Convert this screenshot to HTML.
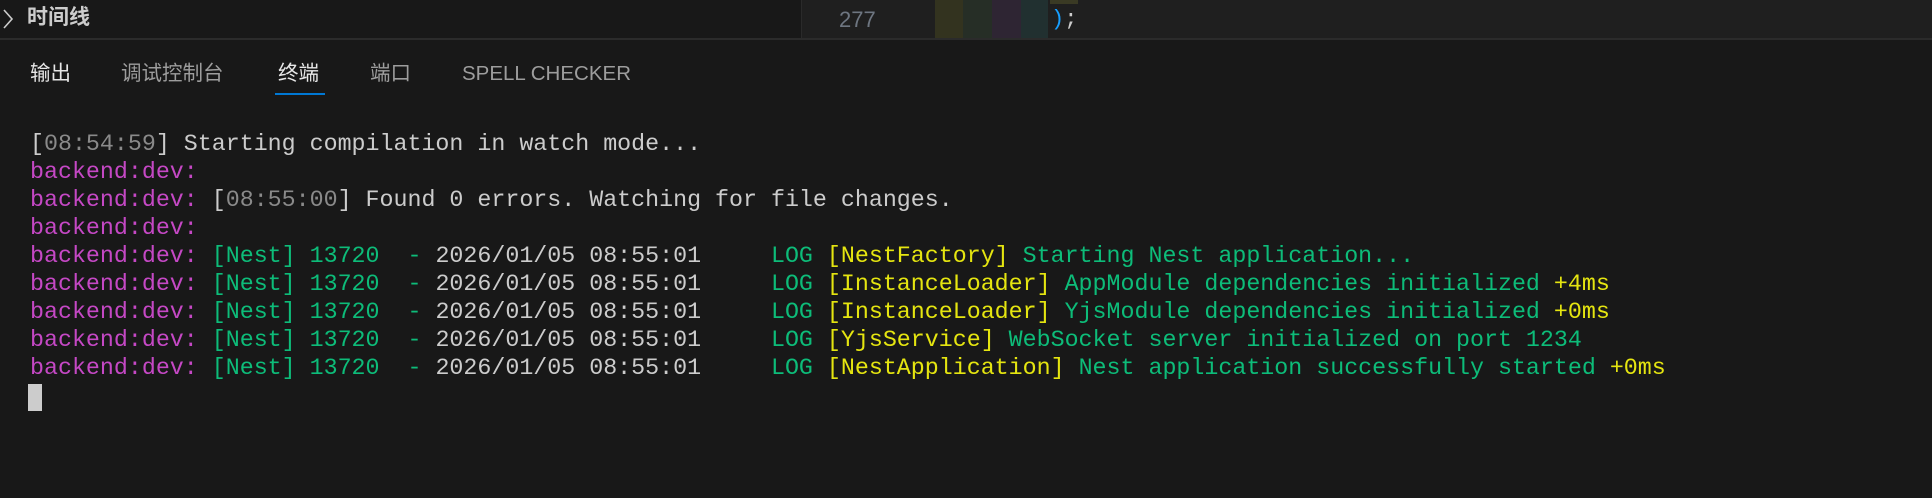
<!DOCTYPE html>
<html><head><meta charset="utf-8"><style>
html,body{margin:0;padding:0;background:#181818;width:1932px;height:498px;overflow:hidden;position:relative;font-family:"Liberation Sans","Noto Sans CJK SC",sans-serif}
.top{position:absolute;left:0;top:0;width:1932px;height:38px;background:#181818;border-bottom:2px solid #2b2b2b}
.tl{position:absolute;left:27px;top:3px;color:#cccccc;font-size:21px;font-weight:bold;line-height:30px}
.ed{position:absolute;left:801px;top:0;width:1131px;height:38px;background:#1f1f1f;border-left:1px solid #2a2a2a}
.ln{position:absolute;left:838px;top:5px;font-family:"Liberation Sans",sans-serif;font-size:22px;color:#6e7681;line-height:30px}
.bar{position:absolute;top:0;height:38px}
.tabs span{position:absolute;top:60px;font-size:20.5px;color:#9d9d9d;line-height:28px}
.term{position:absolute;left:30px;top:130px;font-family:"Liberation Mono",monospace;font-size:23.3px;line-height:28px;white-space:pre;color:#cccccc}
.m{color:#c548c5}.g{color:#0dbc79}.y{color:#e5e510}.d{color:#8a8a8a}
</style></head><body>
<div class="top">
<svg style="position:absolute;left:2px;top:8px" width="12" height="22" viewBox="0 0 12 22"><path d="M2 2 L10 11 L2 20" fill="none" stroke="#cccccc" stroke-width="1.6"/></svg>
<div class="tl">时间线</div>
<div class="ed">
<div class="ln" style="left:37px">277</div>
</div>
<div class="bar" style="left:935px;width:28px;background:#33331f"></div>
<div class="bar" style="left:963px;width:29px;background:#262e26"></div>
<div class="bar" style="left:992px;width:29px;background:#2e2533"></div>
<div class="bar" style="left:1021px;width:27px;background:#213030"></div>
<div class="bar" style="left:1050px;width:28px;height:4px;background:#3a3a24"></div>
<div style="position:absolute;left:1051px;top:5px;font-family:'Liberation Mono',monospace;font-size:22px;line-height:30px;color:#cccccc"><span style="color:#179fff">)</span>;</div>
</div>
<div class="tabs">
<span style="left:30px;color:#e7e7e7">输出</span>
<span style="left:121px">调试控制台</span>
<span style="left:278px;color:#e7e7e7">终端</span>
<span style="left:370px">端口</span>
<span style="left:462px">SPELL CHECKER</span>
</div>
<div style="position:absolute;left:275px;top:93px;width:50px;height:2px;background:#0078d4"></div>
<div class="term">[<span class="d">08:54:59</span>] Starting compilation in watch mode...
<span class="m">backend:dev:</span>
<span class="m">backend:dev:</span> [<span class="d">08:55:00</span>] Found 0 errors. Watching for file changes.
<span class="m">backend:dev:</span>
<span class="m">backend:dev:</span> <span class="g">[Nest] 13720  - </span>2026/01/05 08:55:01 <span class="g">    LOG</span> <span class="y">[NestFactory]</span> <span class="g">Starting Nest application...</span>
<span class="m">backend:dev:</span> <span class="g">[Nest] 13720  - </span>2026/01/05 08:55:01 <span class="g">    LOG</span> <span class="y">[InstanceLoader]</span> <span class="g">AppModule dependencies initialized</span> <span class="y">+4ms</span>
<span class="m">backend:dev:</span> <span class="g">[Nest] 13720  - </span>2026/01/05 08:55:01 <span class="g">    LOG</span> <span class="y">[InstanceLoader]</span> <span class="g">YjsModule dependencies initialized</span> <span class="y">+0ms</span>
<span class="m">backend:dev:</span> <span class="g">[Nest] 13720  - </span>2026/01/05 08:55:01 <span class="g">    LOG</span> <span class="y">[YjsService]</span> <span class="g">WebSocket server initialized on port 1234</span>
<span class="m">backend:dev:</span> <span class="g">[Nest] 13720  - </span>2026/01/05 08:55:01 <span class="g">    LOG</span> <span class="y">[NestApplication]</span> <span class="g">Nest application successfully started</span> <span class="y">+0ms</span></div>
<div style="position:absolute;left:28px;top:384px;width:14px;height:27px;background:#cccccc"></div>
</body></html>
